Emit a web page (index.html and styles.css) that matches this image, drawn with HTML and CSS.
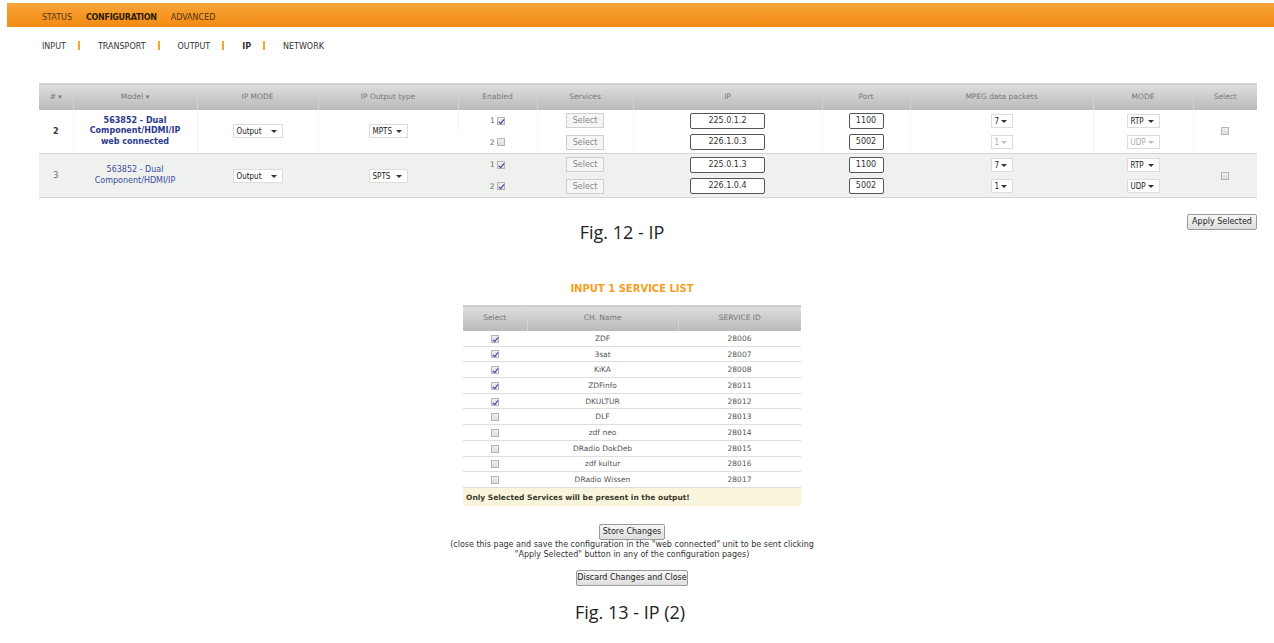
FILE: index.html
```html
<!DOCTYPE html>
<html lang="en">
<head>
    <meta charset="UTF-8">
    <title>IP configuration</title>
    <link rel="stylesheet" href="styles.css">
</head>
<body>
    <div class="top-bar">
        <a href="#">STATUS</a>
        <a href="#" class="active">CONFIGURATION</a>
        <a href="#">ADVANCED</a>
    </div>

    <div class="sub-nav">
        <a href="#">INPUT</a><span class="sep"></span>
        <a href="#">TRANSPORT</a><span class="sep"></span>
        <a href="#">OUTPUT</a><span class="sep"></span>
        <a href="#" class="active">IP</a><span class="sep"></span>
        <a href="#">NETWORK</a>
    </div>

    <table class="ip-table">
        <colgroup>
            <col style="width:34px"><col style="width:124px"><col style="width:121px"><col style="width:140px">
            <col style="width:79px"><col style="width:96px"><col style="width:189px"><col style="width:88px">
            <col style="width:183px"><col style="width:100px"><col style="width:64px">
        </colgroup>
        <thead>
            <tr>
                <th># <span class="arr">&#9662;</span></th>
                <th>Model <span class="arr">&#9662;</span></th>
                <th>IP MODE</th>
                <th>IP Output type</th>
                <th>Enabled</th>
                <th>Services</th>
                <th>IP</th>
                <th>Port</th>
                <th>MPEG data packets</th>
                <th>MODE</th>
                <th>Select</th>
            </tr>
        </thead>
        <tbody class="group">
            <tr>
                <td rowspan="2" class="num bold">2</td>
                <td rowspan="2" class="model bold">563852 - Dual<br>Component/HDMI/IP<br>web connected</td>
                <td rowspan="2"><span class="dd w-output">Output<i></i></span></td>
                <td rowspan="2"><span class="dd w-type">MPTS<i></i></span></td>
                <td><span class="idx">1</span><span class="cb on"></span></td>
                <td><span class="btn-sel">Select</span></td>
                <td><span class="txt w-ip">225.0.1.2</span></td>
                <td><span class="txt w-port">1100</span></td>
                <td><span class="dd w-mpeg">7<i></i></span></td>
                <td><span class="dd w-mode">RTP<i></i></span></td>
                <td rowspan="2"><span class="cb"></span></td>
            </tr>
            <tr class="last">
                <td><span class="idx">2</span><span class="cb"></span></td>
                <td><span class="btn-sel">Select</span></td>
                <td><span class="txt w-ip">226.1.0.3</span></td>
                <td><span class="txt w-port">5002</span></td>
                <td><span class="dd w-mpeg off">1<i></i></span></td>
                <td><span class="dd w-mode off">UDP<i></i></span></td>
            </tr>
        </tbody>
        <tbody class="group alt">
            <tr>
                <td rowspan="2" class="num">3</td>
                <td rowspan="2" class="model">563852 - Dual<br>Component/HDMI/IP</td>
                <td rowspan="2"><span class="dd w-output">Output<i></i></span></td>
                <td rowspan="2"><span class="dd w-type">SPTS<i></i></span></td>
                <td><span class="idx">1</span><span class="cb on"></span></td>
                <td><span class="btn-sel">Select</span></td>
                <td><span class="txt w-ip">225.0.1.3</span></td>
                <td><span class="txt w-port">1100</span></td>
                <td><span class="dd w-mpeg">7<i></i></span></td>
                <td><span class="dd w-mode">RTP<i></i></span></td>
                <td rowspan="2"><span class="cb"></span></td>
            </tr>
            <tr class="last">
                <td><span class="idx">2</span><span class="cb on"></span></td>
                <td><span class="btn-sel">Select</span></td>
                <td><span class="txt w-ip">226.1.0.4</span></td>
                <td><span class="txt w-port">5002</span></td>
                <td><span class="dd w-mpeg">1<i></i></span></td>
                <td><span class="dd w-mode">UDP<i></i></span></td>
            </tr>
        </tbody>
    </table>

    <div class="fig-row">
        <p class="caption">Fig. 12 - IP</p>
        <a href="#" class="button apply">Apply Selected</a>
    </div>

    <div class="service-box">
        <h3>INPUT 1 SERVICE LIST</h3>
        <table class="svc-table">
            <colgroup>
                <col style="width:64px"><col style="width:151px"><col style="width:123px">
            </colgroup>
            <thead>
                <tr><th>Select</th><th>CH. Name</th><th>SERVICE ID</th></tr>
            </thead>
            <tbody>
                <tr><td><span class="cb on"></span></td><td>ZDF</td><td>28006</td></tr>
                <tr><td><span class="cb on"></span></td><td>3sat</td><td>28007</td></tr>
                <tr><td><span class="cb on"></span></td><td>KiKA</td><td>28008</td></tr>
                <tr><td><span class="cb on"></span></td><td>ZDFinfo</td><td>28011</td></tr>
                <tr><td><span class="cb on"></span></td><td>DKULTUR</td><td>28012</td></tr>
                <tr><td><span class="cb"></span></td><td>DLF</td><td>28013</td></tr>
                <tr><td><span class="cb"></span></td><td>zdf neo</td><td>28014</td></tr>
                <tr><td><span class="cb"></span></td><td>DRadio DokDeb</td><td>28015</td></tr>
                <tr><td><span class="cb"></span></td><td>zdf kultur</td><td>28016</td></tr>
                <tr><td><span class="cb"></span></td><td>DRadio Wissen</td><td>28017</td></tr>
                <tr class="note"><td colspan="3">Only Selected Services will be present in the output!</td></tr>
            </tbody>
        </table>

        <a href="#" class="button store">Store Changes</a>
        <p class="hint">(close this page and save the configuration in the "web connected" unit to be sent clicking<br>"Apply Selected" button in any of the configuration pages)</p>
        <a href="#" class="button discard">Discard Changes and Close</a>

        <p class="caption caption2">Fig. 13 - IP (2)</p>
    </div>
</body>
</html>
```

FILE: styles.css
```css
*{
    margin: 0;
    padding: 0;
    box-sizing: border-box;
}

body{
    font-family: "DejaVu Sans", Verdana, sans-serif;
    font-size: 8px;
    color: #333;
    background-color: #fff;
}

a{
    text-decoration: none;
    color: inherit;
}

/* top orange menu */
.top-bar{
    margin: 3px 0 0 7px;
    height: 24px;
    background: linear-gradient(#f9a43a, #f38b12);
    display: flex;
    align-items: center;
    padding: 4px 0 0 35px;
    gap: 14px;
    color: #4d3412;
}

.top-bar a.active{
    font-weight: bold;
    color: #2a1c08;
    letter-spacing: -0.3px;
}

/* second level menu */
.sub-nav{
    display: flex;
    align-items: center;
    padding-left: 42px;
    margin-top: 14px;
    height: 11px;
    color: #333;
}

.sub-nav a.active{
    font-weight: bold;
}

.sub-nav .sep{
    display: inline-block;
    width: 2px;
    height: 9px;
    margin: -3px 18px 0 12px;
    background-color: #f5a623;
}

/* main ip table */
.ip-table{
    margin: 31px 0 0 39px;
    width: 1218px;
    table-layout: fixed;
    border-collapse: collapse;
}

.ip-table th,
.svc-table th{
    height: 26px;
    font-weight: normal;
    color: #777;
    font-size: 7.5px;
    background: linear-gradient(#dedede, #c4c4c4 70%, #b9b9b9);
    border-left: 1px solid #d3d3d3;
    border-top: 1px solid #d0d0d0;
    padding-bottom: 1px;
}

.ip-table th:first-child,
.svc-table th:first-child{
    border-left: none;
}

.ip-table th .arr{
    font-size: 7px;
}

.ip-table td{
    height: 22px;
    text-align: center;
    vertical-align: middle;
    border-left: 1px solid #f2f2f2;
}

.ip-table td:first-child{
    border-left: none;
}

.ip-table tr.last td,
.ip-table td[rowspan]{
    border-bottom: 1px solid #d4d4d4;
}

.ip-table .group.alt td{
    background-color: #eff1ef;
    border-left-color: #eff1ef;
}

.ip-table .num{
    color: #666;
}

.ip-table .bold{
    font-weight: bold;
    color: #333;
}

.ip-table .model{
    color: #3b4c9e;
    line-height: 10.5px;
}

.ip-table .model.bold{
    color: #2a3a8a;
}

/* fake form controls */
.dd{
    position: relative;
    display: inline-block;
    height: 14px;
    line-height: 13px;
    border: 1px solid #dcdcdc;
    background-color: #fff;
    text-align: left;
    padding-left: 3px;
    color: #222;
    font-size: 8px;
    font-family: "DejaVu Sans Condensed", "DejaVu Sans", sans-serif;
    vertical-align: middle;
}

.dd i{
    position: absolute;
    right: 5px;
    top: 5px;
    border-left: 3px solid transparent;
    border-right: 3px solid transparent;
    border-top: 3px solid #333;
}

.dd.off{
    color: #aaa;
}

.dd.off i{
    border-top-color: #bbb;
}

.w-output{ width: 50px; }
.w-type{ width: 39px; }
.w-mpeg{ width: 22px; }
.w-mode{ width: 33px; }

.txt{
    display: inline-block;
    height: 16px;
    line-height: 14px;
    border: 1px solid #555;
    border-radius: 2px;
    background-color: #fff;
    color: #333;
    font-size: 8px;
    vertical-align: middle;
}

.w-ip{ width: 75px; }
.w-port{ width: 35px; }

.btn-sel{
    display: inline-block;
    width: 38px;
    height: 15px;
    line-height: 13px;
    border: 1px solid #cfcfcf;
    background-color: #f5f5f5;
    color: #888;
    font-size: 8px;
    vertical-align: middle;
}

.idx{
    color: #666;
    font-size: 7.5px;
    margin-right: 2px;
    vertical-align: middle;
}

.cb{
    display: inline-block;
    width: 8px;
    height: 8px;
    border: 1px solid #b4b4b4;
    background: linear-gradient(#f0f0f0, #dcdce4);
    vertical-align: middle;
    position: relative;
}

.cb.on::after{
    content: "";
    position: absolute;
    left: 2px;
    top: 0;
    width: 2px;
    height: 5px;
    border-right: 1px solid #3c3c9c;
    border-bottom: 1px solid #3c3c9c;
    transform: rotate(40deg);
}

/* buttons */
.button{
    display: inline-block;
    height: 16px;
    line-height: 14px;
    padding: 0 6px;
    border: 1px solid #9a9a9a;
    border-radius: 2px;
    background: linear-gradient(#f6f6f6, #dedede);
    color: #222;
    font-size: 8px;
}

.fig-row{
    display: grid;
    width: 1257px;
}

.fig-row > *{
    grid-area: 1 / 1;
}

.fig-row .apply{
    justify-self: end;
    align-self: start;
    margin-top: 16px;
    width: 70px;
    padding: 0;
    text-align: center;
}

.caption{
    font-family: "Open Sans", "Noto Sans", sans-serif;
    font-size: 18px;
    color: #222;
    text-align: center;
    width: 1244px;
    margin-top: 22px;
    line-height: 24px;
}

/* service list */
.service-box{
    width: 1264px;
    text-align: center;
    margin-top: 39px;
}

.service-box h3{
    color: #f5a020;
    font-size: 10px;
    line-height: 12px;
}

.svc-table{
    margin: 10px auto 0 463px;
    width: 338px;
    table-layout: fixed;
    border-collapse: collapse;
}

.svc-table th{
    height: 25px;
}

.svc-table td{
    height: 15.7px;
    text-align: center;
    color: #555;
    font-size: 7.5px;
    border-bottom: 1px solid #dedede;
}

.svc-table tr.note td{
    height: 19px;
    text-align: left;
    padding-left: 3px;
    background-color: #f8f5dc;
    font-weight: bold;
    color: #3a3a2a;
    border-bottom: none;
}

.service-box .store{
    margin-top: 18px;
    width: 66px;
    padding: 0;
}

.service-box .hint{
    color: #333;
    font-size: 8px;
    line-height: 10px;
    margin-top: 0;
}

.service-box .discard{
    margin-top: 10px;
    width: 112px;
    padding: 0;
}

.service-box .caption2{
    width: auto;
    margin-top: 14px;
    margin-left: -4px;
}
```
